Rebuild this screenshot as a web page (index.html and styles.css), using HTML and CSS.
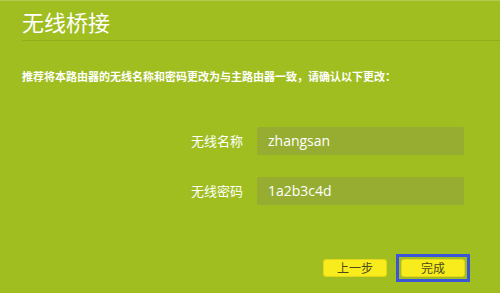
FILE: index.html
```html
<!DOCTYPE html>
<html lang="zh-CN">
<head>
<meta charset="utf-8">
<title>无线桥接</title>
<link rel="stylesheet" href="styles.css">
</head>
<body>
<div class="page">
  <div class="header"><h1 class="title">无线桥接</h1></div>
  <p class="desc">推荐将本路由器的无线名称和密码更改为与主路由器一致，请确认以下更改：</p>
  <div class="form">
    <label class="label">无线名称</label>
    <div class="input">zhangsan</div>
    <label class="label">无线密码</label>
    <div class="input">1a2b3c4d</div>
  </div>
  <div class="actions">
    <button class="btn">上一步</button>
    <span class="focus-ring"><button class="btn">完成</button></span>
  </div>
</div>
</body>
</html>
```
FILE: styles.css
```css
html, body {
  margin: 0;
  padding: 0;
}
body {
  width: 500px;
  height: 293px;
  overflow: hidden;
  background: #a0be1f;
  font-family: "Noto Sans CJK SC", "Open Sans", sans-serif;
  color: #ffffff;
}
.page {
  box-sizing: border-box;
  height: 293px;
  border-top: 1px solid #b2cb4c;
  padding-left: 22px;
}
.header {
  height: 39px;
  border-bottom: 1px solid #91ae1a;
}
.title {
  margin: 0;
  font-size: 22px;
  font-weight: normal;
  line-height: 40px;
}
.desc {
  margin: 27px 0 0;
  font-size: 11px;
  font-weight: bold;
  line-height: 16px;
}
.form {
  display: grid;
  grid-template-columns: 221px 207px;
  column-gap: 14px;
  row-gap: 22px;
  margin-top: 43px;
  align-items: center;
}
.label {
  text-align: right;
  font-size: 13px;
  line-height: 28px;
}
.input {
  height: 28px;
  box-sizing: border-box;
  background: #96ad31;
  border-radius: 2px;
  padding-left: 11px;
  font-family: "Open Sans", "Noto Sans", sans-serif;
  font-size: 14px;
  line-height: 28px;
}
.actions {
  display: flex;
  justify-content: flex-end;
  gap: 14px;
  margin-top: 54px;
  padding-right: 35px;
}
.btn {
  width: 64px;
  height: 18px;
  padding: 0;
  background: #f8ec1c;
  border: 1px solid #e6d61a;
  border-radius: 3px;
  color: #4c4a18;
  font-family: "Noto Sans CJK SC", sans-serif;
  font-size: 12px;
  line-height: 16px;
}
.focus-ring {
  display: flex;
  outline: 3px solid #3c55d8;
  outline-offset: 2px;
}
```
